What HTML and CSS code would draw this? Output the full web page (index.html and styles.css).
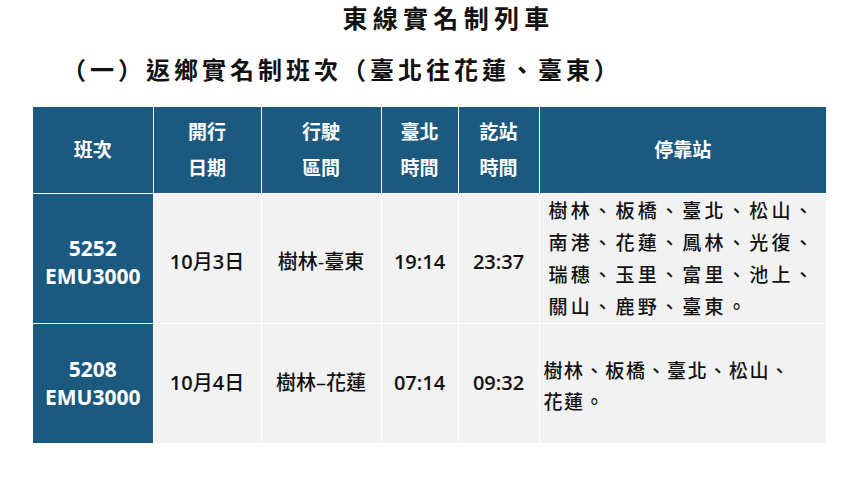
FILE: index.html
```html
<!DOCTYPE html>
<html lang="zh-Hant">
<head>
<meta charset="utf-8">
<link rel="stylesheet" href="styles.css">
</head>
<body>
<div class="page">
  <h1 class="title">東線實名制列車</h1>
  <h2 class="subtitle">（一）返鄉實名制班次（臺北往花蓮、臺東）</h2>
  <table class="schedule">
    <colgroup>
      <col class="c1"><col class="c2"><col class="c3"><col class="c4"><col class="c5"><col class="c6">
    </colgroup>
    <thead>
      <tr>
        <th>班次</th>
        <th>開行<br>日期</th>
        <th>行駛<br>區間</th>
        <th>臺北<br>時間</th>
        <th>訖站<br>時間</th>
        <th>停靠站</th>
      </tr>
    </thead>
    <tbody>
      <tr class="r1">
        <td class="train"><div class="shift">5252<br>EMU3000</div></td>
        <td><div class="shift"><span class="num">10</span>月<span class="num">3</span>日</div></td>
        <td><div class="shift">樹林-臺東</div></td>
        <td class="num"><div class="shift">19:14</div></td>
        <td class="num"><div class="shift">23:37</div></td>
        <td class="stops wide">樹林、板橋、臺北、松山、<br>南港、花蓮、鳳林、光復、<br>瑞穗、玉里、富里、池上、<br>關山、鹿野、臺東。</td>
      </tr>
      <tr class="r2">
        <td class="train">5208<br>EMU3000</td>
        <td><span class="num">10</span>月<span class="num">4</span>日</td>
        <td>樹林–花蓮</td>
        <td class="num">07:14</td>
        <td class="num">09:32</td>
        <td class="stops narrow">樹林、板橋、臺北、松山、<br>花蓮。</td>
      </tr>
    </tbody>
  </table>
</div>
</body>
</html>
```

FILE: styles.css
```css
html, body {
  margin: 0;
  padding: 0;
  background: #ffffff;
}
body {
  font-family: "Open Sans", "Noto Sans CJK TC", sans-serif;
  color: #111111;
}
.page {
  width: 867px;
  height: 480px;
}
.title {
  margin: 0;
  height: 34px;
  line-height: 34px;
  font-family: "Noto Sans CJK TC", sans-serif;
  font-size: 25px;
  font-weight: 700;
  letter-spacing: 5.3px;
  text-align: center;
  padding-left: 30px;
}
.subtitle {
  margin: 17px 0 0 0;
  height: 36px;
  line-height: 36px;
  font-family: "Noto Sans CJK TC", sans-serif;
  font-size: 24px;
  font-weight: 700;
  letter-spacing: 4px;
  padding-left: 62px;
}
.schedule {
  margin: 20px 0 0 33px;
  border-collapse: collapse;
  table-layout: fixed;
  width: 793px;
}
.c1 { width: 120px; }
.c2 { width: 108px; }
.c3 { width: 120px; }
.c4 { width: 77px; }
.c5 { width: 81px; }
.c6 { width: 287px; }
.schedule th,
.schedule td {
  box-sizing: border-box;
  border: 1px solid #ffffff;
  padding: 0;
  text-align: center;
  vertical-align: middle;
}
.schedule tr > :first-child { border-left: none; }
.schedule tr > :last-child { border-right: none; }
.schedule thead th { border-top: none; }
.schedule tbody tr:last-child td { border-bottom: none; }
.schedule th {
  background: #1b5a7e;
  color: #ffffff;
  height: 86px;
  font-size: 19px;
  font-weight: 700;
  line-height: 36px;
}
.schedule td {
  background: #f2f2f2;
  font-size: 20px;
  font-weight: 500;
  line-height: 28px;
}
.schedule .num { font-weight: 600; }
.r1 td { height: 130px; }
.r2 td { height: 120px; }
.shift { padding-top: 8px; }
.schedule td.train {
  background: #1b5a7e;
  color: #ffffff;
  font-weight: 700;
  font-size: 21px;
}
.schedule td.stops {
  text-align: left;
  font-family: "Noto Sans CJK TC", sans-serif;
  font-size: 19px;
  font-weight: 500;
}
.schedule td.wide {
  padding: 0 0 0 9px;
  line-height: 32px;
  letter-spacing: 3.3px;
}
.schedule td.narrow {
  padding: 4px 0 0 4px;
  line-height: 31px;
  letter-spacing: 1.6px;
}
```
